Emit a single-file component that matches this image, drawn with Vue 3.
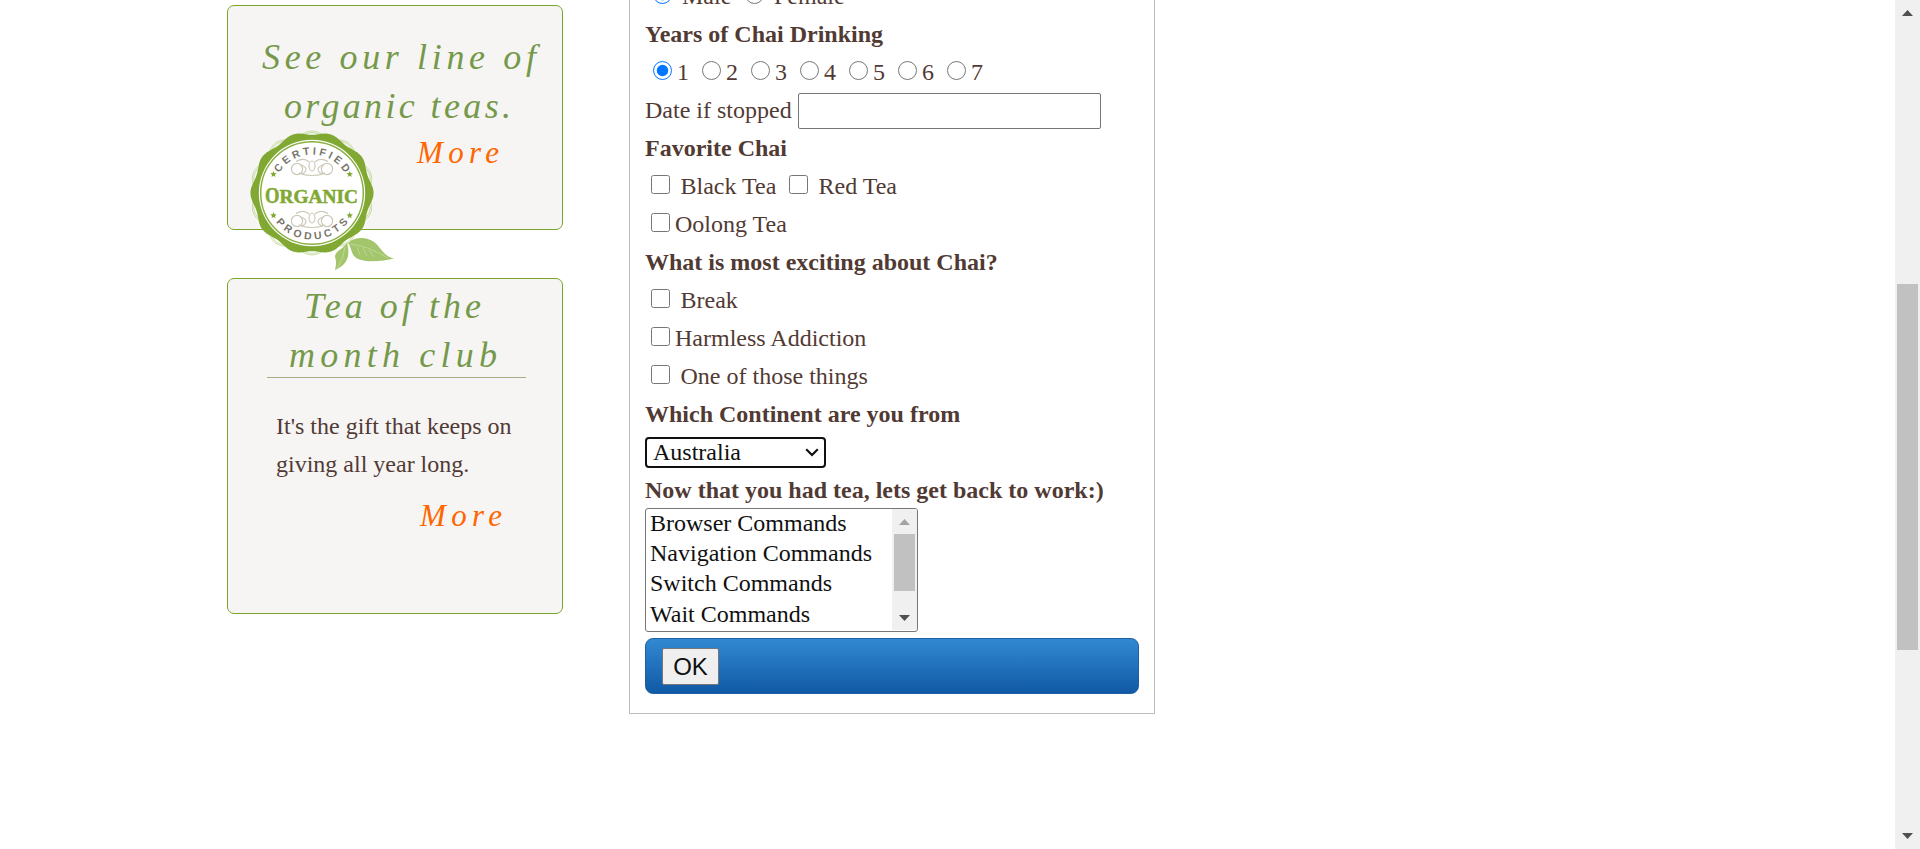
<script setup>
const years = [1, 2, 3, 4, 5, 6, 7]
const commands = ['Browser Commands', 'Navigation Commands', 'Switch Commands', 'Wait Commands']

const polar = (r, deg) => {
  const a = (deg * Math.PI) / 180
  return [66 + r * Math.cos(a), 65 + r * Math.sin(a)]
}
const ring = (base, amp, phase) => {
  const pts = []
  for (let d = 0; d < 360; d += 3) {
    const [x, y] = polar(base + amp * Math.cos(((d - phase) * 10 * Math.PI) / 180), d)
    pts.push(x.toFixed(2) + ',' + y.toFixed(2))
  }
  return pts.join(' ')
}
const body = ring(59.9, 1.7, 0)
const outlineA = ring(59.8, 2.2, 18)
const outlineB = ring(58.3, 2.2, 18)
const star = (cx, cy) => {
  const pts = []
  for (let i = 0; i < 10; i++) {
    const r = i % 2 ? 1.5 : 3.4
    const a = ((i * 36 - 90) * Math.PI) / 180
    pts.push((cx + r * Math.cos(a)).toFixed(2) + ',' + (cy + r * Math.sin(a)).toFixed(2))
  }
  return pts.join(' ')
}
const stars = [star(27.5, 46.3), star(103.7, 46.3), star(27.5, 87.5), star(103.7, 87.5)]
</script>

<template>
  <div class="page">
    <aside class="side">
      <section class="card organic">
        <svg class="script" width="334" height="223" viewBox="228 6 334 223">
          <g class="title">
            <text x="262" y="68.5" textLength="274">See our line of</text>
            <text x="284" y="117.5" textLength="227">organic teas.</text>
          </g>
          <text class="more" x="417" y="163" textLength="82">More</text>
        </svg>
        <svg class="seal" width="152" height="146" viewBox="0 0 152 146">
          <defs>
            <path id="arcTop" d="M27.5 65 A38.5 38.5 0 0 1 104.5 65" />
            <path id="arcBottom" d="M19.5 65 A46.5 46.5 0 0 0 112.5 65" />
          </defs>
          <g fill="none" stroke="#bcd58f" stroke-width=".8">
            <polygon :points="outlineA" />
            <polygon :points="outlineB" />
          </g>
          <polygon :points="body" fill="#80a832" />
          <circle cx="66" cy="65" r="53.2" fill="#fff" />
          <circle cx="66" cy="65" r="51.3" fill="#fff" stroke="#8bb042" stroke-width="1.5" />
          <g class="arc">
            <text text-anchor="middle"><textPath href="#arcTop" startOffset="50%" textLength="79">CERTIFIED</textPath></text>
            <text text-anchor="middle"><textPath href="#arcBottom" startOffset="50%" textLength="83">PRODUCTS</textPath></text>
          </g>
          <g fill="none" stroke="#cdc8b8" stroke-width="1.2">
            <g id="curls">
              <circle cx="51" cy="41" r="5.6" />
              <circle cx="60" cy="42" r="0" />
              <circle cx="81" cy="41" r="5.6" />
              <path d="M54 37 Q60 38 60 42 Q58 47 53 45 M78 37 Q72 38 72 42 Q74 47 79 45 M50 33.5 Q58 29 63 34 M82 33.5 Q74 29 69 34 M55 46 Q66 49 77 46" />
              <ellipse cx="66" cy="38" rx="3" ry="5" />
            </g>
            <use href="#curls" transform="translate(0 52)" />
          </g>
          <polygon v-for="s in stars" :key="s" :points="s" fill="#80a832" />
          <text class="word cap" x="19" y="75" textLength="14.5" lengthAdjust="spacingAndGlyphs">O</text>
          <text class="word" x="33.5" y="75" textLength="78.5" lengthAdjust="spacingAndGlyphs">RGANIC</text>
          <path d="M102 115 C108 109 120 108 128 114 C135 119 137 128 148 130.5 C138 133 122 135 112 131 C105 128 106 120 102 115Z" fill="#a3c56b" />
          <path d="M89 142 Q91 133 89 129 C89 123 96 122 101 115 C104 126 103 136 89 142Z" fill="#a3c56b" />
          <path d="M103 116 Q120 117 142 130 M99 119 Q98 130 91 141 M111 119 L114 127 M117 120 L121 128 M123 122 L128 129" fill="none" stroke="#c4dc9c" stroke-width=".8" />
        </svg>
      </section>
      <section class="card club">
        <svg class="script" width="334" height="334" viewBox="228 279 334 334">
          <g class="title">
            <text x="304" y="317.5" textLength="177">Tea of the</text>
            <text x="289" y="366.5" textLength="208">month club</text>
          </g>
          <text class="more" x="420" y="526" textLength="82">More</text>
          <path d="M267 377.5H526" stroke="#a9ad84" />
        </svg>
        <p class="gift">It's the gift that keeps on<br />giving all year long.</p>
      </section>
    </aside>

    <main class="form">
      <div class="row"><input type="radio" name="g" checked class="r" /><span class="male">Male</span><input type="radio" name="g" /><span class="female">Female</span></div>
      <div class="row b">Years of Chai Drinking</div>
      <div class="row years">
        <label v-for="y in years" :key="y"><input type="radio" name="y" :checked="y === 1" />{{ y }}</label>
      </div>
      <div class="row"><span class="date">Date if stopped</span><div class="field"></div></div>
      <div class="row b">Favorite Chai</div>
      <div class="row"><input type="checkbox" class="c wide" /><span class="black">Black Tea</span><input type="checkbox" class="wide" />Red Tea</div>
      <div class="row"><input type="checkbox" class="c" />Oolong Tea</div>
      <div class="row b">What is most exciting about Chai?</div>
      <div class="row"><input type="checkbox" class="c wide" />Break</div>
      <div class="row"><input type="checkbox" class="c" />Harmless Addiction</div>
      <div class="row"><input type="checkbox" class="c wide" />One of those things</div>
      <div class="row b">Which Continent are you from</div>
      <div class="row">
        <div class="select">Australia
          <svg width="14" height="9" viewBox="0 0 14 9"><path d="M1.2 1.2 L7 7 L12.8 1.2" fill="none" stroke="#101010" stroke-width="2.2" /></svg>
        </div>
      </div>
      <div class="row b">Now that you had tea, lets get back to work:)</div>
      <div class="list">
        <div class="options"><div v-for="c in commands" :key="c">{{ c }}</div></div>
        <div class="track">
          <svg width="11" height="6"><path d="M0 6 L5.5 0 L11 6Z" fill="#a3a3a3" /></svg>
          <i></i>
          <svg class="end" width="11" height="6"><path d="M0 0 H11 L5.5 6Z" fill="#505050" /></svg>
        </div>
      </div>
      <div class="bar"><button>OK</button></div>
    </main>

    <div class="scroll">
      <svg width="11" height="6"><path d="M0 6 L5.5 0 L11 6Z" fill="#505050" /></svg>
      <i></i>
      <svg class="end" width="11" height="6"><path d="M0 0 H11 L5.5 6Z" fill="#505050" /></svg>
    </div>
  </div>
</template>

<style>
body { margin: 0; background: #fff; }
</style>

<style scoped>
.page { display: flex; align-items: flex-start; box-sizing: border-box; width: 1920px; height: 849px; padding-left: 227px; overflow: hidden; background: #fff; color: #523a34; font: 24px/38px "Liberation Serif", "Times New Roman", serif; }
.side { width: 336px; padding-top: 5px; flex: none; }
.card { position: relative; box-sizing: border-box; border: 1px solid #7aa62b; border-radius: 7px; background: #f6f5f4; }
.organic { height: 225px; z-index: 1; }
.club { height: 336px; margin-top: 48px; }
.script { display: block; font-style: italic; }
.title { font-size: 36px; fill: #75994a; }
.more { font-size: 31px; fill: #ff6600; }
.seal { position: absolute; left: 18px; top: 122px; }
.arc { font: bold 10.5px "Liberation Sans", sans-serif; fill: #77756b; }
.word { font: bold 18.5px "Liberation Serif", serif; fill: #80a832; stroke: #80a832; stroke-width: .5; }
.cap { font-size: 23.5px; }
.gift { position: absolute; left: 48px; top: 128px; margin: 0; white-space: nowrap; }
.form { box-sizing: border-box; width: 526px; flex: none; margin: -24px 0 0 66px; height: 738px; padding: 1px 15px 0; border: 1px solid #bdbdbd; border-top: 0; }
.row { display: flex; height: 38px; white-space: pre; }
.b { font-weight: bold; }
input { flex: none; width: 19px; height: 19px; margin: 8px 4px 0 0; }
input.r { margin-left: 8px; margin-right: 10px; }
.male { width: 63px; }
.female { margin-left: 6px; }
.years { padding-left: 8px; }
.years label { display: flex; width: 49px; }
.years input { margin-right: 5px; }
input.c { margin-left: 6px; margin-right: 5px; }
input.wide { margin-right: 10.5px; }
.black { width: 108.5px; }
.date { width: 153px; }
.field { box-sizing: border-box; width: 303px; height: 36px; margin-top: 2px; border: 1px solid #767676; border-radius: 2px; }
.select { display: flex; justify-content: space-between; align-items: center; box-sizing: border-box; width: 181px; height: 31px; margin-top: 4px; padding: 0 5px 0 6px; border: 2px solid #101010; border-radius: 4px; color: #101010; line-height: 27px; }
.list { display: flex; justify-content: space-between; box-sizing: border-box; width: 273px; height: 124px; margin-top: -1px; border: 1px solid #767676; border-radius: 3px; color: #101010; line-height: 30.2px; overflow: hidden; }
.options { padding: 0 0 0 4px; margin-top: -1px; }
.track { display: flex; flex-direction: column; align-items: center; box-sizing: border-box; width: 25px; height: 121px; padding: 10px 0 9px; background: #f0f0f0; }
.track i { width: 21px; height: 57px; margin-top: 9px; background: #c1c1c1; }
.end { margin-top: auto; }
.bar { box-sizing: border-box; height: 56px; margin-top: 6px; padding: 9px 16px; border: 1px solid #1c5fa5; border-radius: 8px; background: linear-gradient(#3289d2, #1159a5); }
button { display: block; box-sizing: border-box; width: 57px; height: 37px; padding: 0; border: 1px solid #767676; border-radius: 2px; background: #efefef; color: #101010; font: 24px "Liberation Sans", Arial, sans-serif; }
.scroll { display: flex; flex-direction: column; align-items: center; box-sizing: border-box; width: 25px; height: 849px; margin-left: auto; padding: 10px 0; background: #f0f0f0; }
.scroll i { width: 21px; height: 366px; margin-top: 268px; background: #c1c1c1; }
</style>
